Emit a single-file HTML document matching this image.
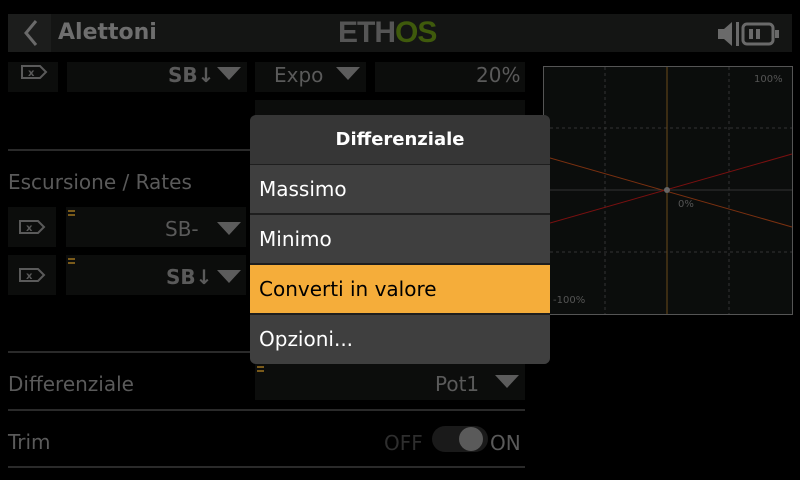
<!DOCTYPE html><html><head><style>
body{margin:0;width:800px;height:480px;background:#000;position:relative;overflow:hidden;font-family:"DejaVu Sans","Liberation Sans",sans-serif;}
.a{position:absolute}
.box{position:absolute;background:#0c0d0c}
.t{position:absolute;color:#5a5a5a;font-size:20px}
.tri{position:absolute;width:0;height:0;border-left:12px solid transparent;border-right:12px solid transparent;border-top:13px solid #5c5c5c}
.line{position:absolute;left:8px;width:517px;height:2px;background:#2a2a2a}
.m{position:absolute;left:0;width:300px;height:48px;background:#3f3f3f;color:#fff;font-size:20px;line-height:48px;padding-left:9px;box-sizing:border-box}
.gr{position:absolute;width:7px;height:2px;border-top:2px solid #7a5a1a;border-bottom:2px solid #7a5a1a}
</style></head><body>
<div class="a" style="left:8px;top:14px;width:784px;height:38px;background:#141514"></div>
<div class="a" style="left:8px;top:14px;width:43px;height:38px;background:#1c1d1c"></div>
<svg class="a" style="left:20px;top:18px" width="22" height="30"><path d="M16 3 L6 15 L16 27" stroke="#6a6a6a" stroke-width="3" fill="none"/></svg>
<div class="a" style="left:58px;top:20px;color:#6e6e6e;font-size:22px;font-weight:bold">Alettoni</div>
<div class="a" style="left:338px;top:16px;font-size:30px;font-weight:bold;letter-spacing:-1px;font-family:'Liberation Sans',sans-serif"><span style="color:#555">ETH</span><span style="color:#3f5a0c">OS</span></div>
<svg class="a" style="left:716px;top:20px" width="66" height="28"><path d="M2 9h6l8-7v24l-8-7H2z" fill="#6a6a6a"/><rect x="20" y="2" width="3" height="24" fill="#6a6a6a"/><rect x="27" y="4" width="30" height="20" rx="4" stroke="#6a6a6a" stroke-width="3" fill="none"/><rect x="59" y="10" width="4" height="8" fill="#6a6a6a"/><rect x="33" y="9" width="4" height="10" fill="#6a6a6a"/><rect x="40" y="9" width="4" height="10" fill="#6a6a6a"/></svg>

<div class="box" style="left:8px;top:62px;width:50px;height:30px"></div>
<svg class="a" style="left:20px;top:64px" width="28" height="16"><path d="M2 2h18l6 6-6 6H2z" fill="none" stroke="#5a5a5a" stroke-width="2"/><text x="8" y="12" font-size="10" fill="#5a5a5a" font-weight="bold">x</text></svg>
<div class="box" style="left:67px;top:62px;width:180px;height:30px"></div>
<div class="t" style="left:168px;top:63px;font-weight:bold">SB↓</div><div class="tri" style="left:217px;top:67px"></div>
<div class="box" style="left:255px;top:62px;width:111px;height:30px"></div>
<div class="t" style="left:274px;top:63px">Expo</div><div class="tri" style="left:336px;top:67px"></div>
<div class="box" style="left:375px;top:62px;width:150px;height:30px"></div>
<div class="t" style="left:476px;top:63px">20%</div>
<div class="box" style="left:255px;top:100px;width:270px;height:30px"></div>
<div class="line" style="top:149px"></div>
<div class="t" style="left:8px;top:170px">Escursione / Rates</div>
<div class="box" style="left:8px;top:207px;width:48px;height:40px"></div>
<div class="box" style="left:66px;top:207px;width:180px;height:40px"></div>
<svg class="a" style="left:18px;top:219px" width="28" height="16"><path d="M2 2h18l6 6-6 6H2z" fill="none" stroke="#5a5a5a" stroke-width="2"/><text x="8" y="12" font-size="10" fill="#5a5a5a" font-weight="bold">x</text></svg>
<div class="gr" style="left:68px;top:210px"></div>
<div class="t" style="left:165px;top:217px">SB-</div><div class="tri" style="left:217px;top:222px"></div>
<div class="box" style="left:8px;top:255px;width:48px;height:40px"></div>
<div class="box" style="left:66px;top:255px;width:180px;height:40px"></div>
<svg class="a" style="left:18px;top:267px" width="28" height="16"><path d="M2 2h18l6 6-6 6H2z" fill="none" stroke="#5a5a5a" stroke-width="2"/><text x="8" y="12" font-size="10" fill="#5a5a5a" font-weight="bold">x</text></svg>
<div class="gr" style="left:68px;top:258px"></div>
<div class="t" style="left:166px;top:265px;font-weight:bold">SB↓</div><div class="tri" style="left:217px;top:270px"></div>
<div class="line" style="top:351px"></div>
<div class="t" style="left:8px;top:372px">Differenziale</div>
<div class="box" style="left:255px;top:364px;width:270px;height:36px"></div>
<div class="gr" style="left:257px;top:366px"></div>
<div class="t" style="left:435px;top:372px">Pot1</div><div class="tri" style="left:495px;top:375px"></div>
<div class="line" style="top:409px"></div>
<div class="t" style="left:8px;top:430px">Trim</div>
<div class="t" style="left:384px;top:431px;color:#2e2e2e">OFF</div>
<div class="a" style="left:432px;top:426px;width:56px;height:26px;border-radius:13px;background:#1a1a1a"></div>
<div class="a" style="left:459px;top:427px;width:24px;height:24px;border-radius:12px;background:#5a5a5a"></div>
<div class="t" style="left:490px;top:431px">ON</div>
<div class="line" style="top:466px"></div>

<svg class="a" style="left:543px;top:66px" width="250" height="249">
<rect x="0.5" y="0.5" width="249" height="248" fill="#0b0d0c" stroke="#555"/>
<g stroke="#333" stroke-dasharray="3,3"><line x1="62" y1="1" x2="62" y2="248"/><line x1="186" y1="1" x2="186" y2="248"/><line x1="1" y1="62" x2="249" y2="62"/><line x1="1" y1="186" x2="249" y2="186"/></g>
<line x1="1" y1="124" x2="249" y2="124" stroke="#333"/>
<line x1="124" y1="1" x2="124" y2="248" stroke="#6b4a1a"/>
<line x1="0" y1="90" x2="249" y2="161" stroke="#7a3010"/>
<line x1="0" y1="159" x2="249" y2="88" stroke="#7a1010"/>
<circle cx="124" cy="124" r="3" fill="#666"/>
<text x="211" y="16" font-size="10" fill="#555" font-family="DejaVu Sans">100%</text>
<text x="135" y="141" font-size="10" fill="#555" font-family="DejaVu Sans">0%</text>
<text x="10" y="237" font-size="10" fill="#555" font-family="DejaVu Sans">-100%</text>
</svg>

<div class="a" style="left:250px;top:115px;width:300px;height:249px;background:#1e1e1e;border-radius:6px;overflow:hidden">
<div class="a" style="left:0;top:0;width:300px;height:49px;background:#363636;color:#fff;font-weight:bold;font-size:18px;line-height:49px;text-align:center">Differenziale</div>
<div class="m" style="top:50px">Massimo</div>
<div class="m" style="top:100px">Minimo</div>
<div class="m" style="top:150px;background:#f5ad3a;color:#000">Converti in valore</div>
<div class="m" style="top:200px;height:49px">Opzioni...</div>
</div>
</body></html>
